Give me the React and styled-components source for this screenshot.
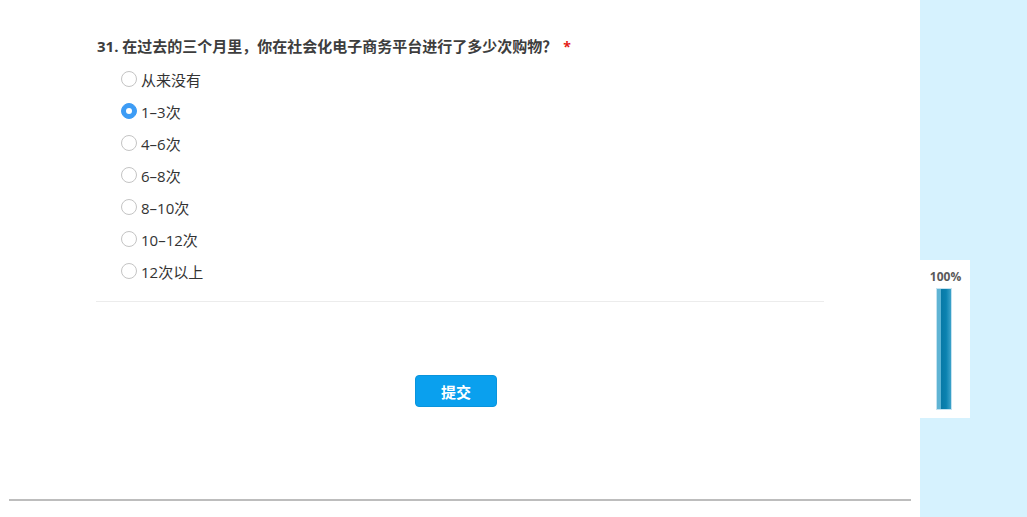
import styled, { createGlobalStyle } from 'styled-components';

const GlobalStyle = createGlobalStyle`
    html, body {
        margin: 0;
        padding: 0;
        background: #ffffff;
        font-family: "Open Sans", "Noto Sans CJK SC", sans-serif;
    }
`;

const options = ['从来没有', '1–3次', '4–6次', '6–8次', '8–10次', '10–12次', '12次以上'];

const Page = styled.div`
    display: flex;
    width: 1027px;
    height: 517px;
    overflow: hidden;
`;

const Main = styled.div`
    width: 920px;
    padding-top: 36px;
    box-sizing: border-box;
`;

const Question = styled.div`
    margin-left: 96px;
    width: 728px;
    border-bottom: 1px solid #ececec;
    padding-bottom: 14px;
`;

const Title = styled.div`
    height: 20px;
    font-size: 15px;
    line-height: 20px;
    font-weight: 700;
    color: #3d3d3d;
    padding-left: 1px;
`;

const Required = styled.span`
    color: #e41b17;
    margin-left: 6px;
    font-size: 14px;
`;

const OptionList = styled.div`
    margin-top: 7px;
    padding-left: 25px;
    display: flex;
    flex-direction: column;
`;

const Option = styled.label`
    display: flex;
    align-items: center;
    height: 32px;
    font-size: 15px;
    color: #333;
`;

const Radio = styled.span`
    box-sizing: border-box;
    width: 16px;
    height: 16px;
    border-radius: 50%;
    border: 1px solid ${(p) => (p.$checked ? '#3d9cf5' : '#c4c4c4')};
    background: ${(p) => (p.$checked ? '#3d9cf5' : '#fff')};
    margin-right: 4px;
    display: flex;
    align-items: center;
    justify-content: center;

    &::after {
        content: '';
        display: ${(p) => (p.$checked ? 'block' : 'none')};
        width: 6px;
        height: 6px;
        border-radius: 50%;
        background: #fff;
    }
`;

const SubmitRow = styled.div`
    display: flex;
    justify-content: center;
    padding-right: 8px;
    margin-top: 73px;
`;

const SubmitButton = styled.button`
    width: 82px;
    height: 32px;
    border: 1px solid #0a94dc;
    border-radius: 4px;
    background: #0aa0ee;
    color: #fff;
    font-family: "Open Sans", "Noto Sans CJK SC", sans-serif;
    font-size: 15px;
    font-weight: 700;
    padding: 0;
`;

const Footer = styled.div`
    margin: 92px 9px 0 9px;
    border-top: 2px solid #bdbdbd;
`;

const Sidebar = styled.div`
    flex: 1;
    background: #d6f2fe;
    padding-top: 260px;
`;

const ProgressPanel = styled.div`
    width: 50px;
    height: 158px;
    background: #fff;
    display: flex;
    flex-direction: column;
    align-items: center;
    box-sizing: border-box;
    padding-top: 10px;
`;

const ProgressLabel = styled.div`
    font-size: 12px;
    line-height: 14px;
    font-weight: 700;
    color: #5a5a5a;
    margin-left: 1px;
`;

const ProgressTrack = styled.div`
    margin-top: 4px;
    margin-right: 3px;
    width: 16px;
    height: 122px;
    box-sizing: border-box;
    border: 1px solid #c4e3f1;
    background: linear-gradient(
        to right,
        #5fb4d4 0,
        #5fb4d4 25%,
        #0878a5 25%,
        #0a82b0 65%,
        #3da2c9 100%
    );
`;

export default function App() {
    return (
        <>
            <GlobalStyle />
            <Page>
                <Main>
                    <Question>
                        <Title>
                            31. 在过去的三个月里，你在社会化电子商务平台进行了多少次购物？
                            <Required>*</Required>
                        </Title>
                        <OptionList>
                            {options.map((opt, i) => (
                                <Option key={opt}>
                                    <Radio $checked={i === 1} />
                                    {opt}
                                </Option>
                            ))}
                        </OptionList>
                    </Question>
                    <SubmitRow>
                        <SubmitButton>提交</SubmitButton>
                    </SubmitRow>
                    <Footer />
                </Main>
                <Sidebar>
                    <ProgressPanel>
                        <ProgressLabel>100%</ProgressLabel>
                        <ProgressTrack />
                    </ProgressPanel>
                </Sidebar>
            </Page>
        </>
    );
}
